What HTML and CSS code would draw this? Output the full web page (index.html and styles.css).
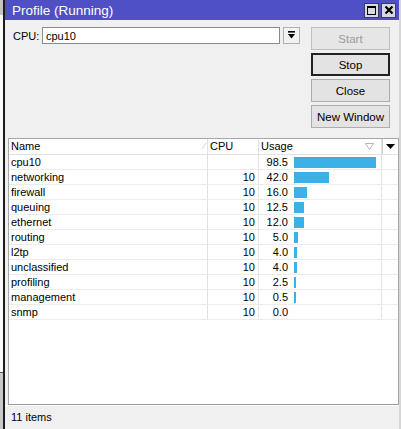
FILE: index.html
```html
<!DOCTYPE html>
<html lang="en">
<head>
  <meta charset="UTF-8" />
  <title>Profile (Running)</title>
  <link rel="stylesheet" href="styles.css">
</head>
<body>

  <div class="backdrop">
    <div class="bd-top"></div>
    <div class="bd-mid"></div>
    <div class="bd-bottom"></div>
  </div>

  <div class="window">
    <div class="titlebar">
      <span class="title">Profile (Running)</span>
      <div class="title-buttons">
        <span class="tb-btn"><span class="tb-max"></span></span>
        <span class="tb-btn">
          <svg width="10" height="10" viewBox="0 0 10 10"><path d="M1.5 1.5 L8.5 8.5 M8.5 1.5 L1.5 8.5" stroke="#000" stroke-width="2.2" /></svg>
        </span>
      </div>
    </div>

    <div class="content">
      <div class="top">
        <div class="cpu-row">
          <label class="cpu-label" for="cpu">CPU:</label>
          <div class="cpu-input" id="cpu">cpu10</div>
          <span class="drop-btn">
            <svg width="9" height="9" viewBox="0 0 9 9"><rect x="1" y="0" width="7" height="1.6" fill="#000" /><path d="M1 3 H8 L4.5 7.5 Z" fill="#000" /></svg>
          </span>
        </div>
        <div class="actions">
          <button class="btn" disabled>Start</button>
          <button class="btn btn-default">Stop</button>
          <button class="btn">Close</button>
          <button class="btn">New Window</button>
        </div>
      </div>

      <div class="table">
        <div class="row head">
          <div class="cell">Name<span class="sort-mark">&#x2044;</span></div>
          <div class="cell">CPU</div>
          <div class="cell">Usage<span class="sort-down">
            <svg width="9" height="7" viewBox="0 0 9 7"><path d="M0.5 0.5 H8.5 L4.5 6.5 Z" fill="none" stroke="#b4b4b4" /></svg>
          </span></div>
          <div class="cell col-menu">
            <svg width="9" height="5" viewBox="0 0 9 5"><path d="M0 0 H9 L4.5 5 Z" fill="#000" /></svg>
          </div>
        </div>
        <div class="rows" id="rows"></div>
        <div class="empty"></div>
      </div>
    </div>

    <div class="statusbar">11 items</div>
  </div>

  <script>
    (() => {
      // Profile data
      const entries = [
        { name: 'cpu10', cpu: '', usage: 98.5 },
        { name: 'networking', cpu: '10', usage: 42.0 },
        { name: 'firewall', cpu: '10', usage: 16.0 },
        { name: 'queuing', cpu: '10', usage: 12.5 },
        { name: 'ethernet', cpu: '10', usage: 12.0 },
        { name: 'routing', cpu: '10', usage: 5.0 },
        { name: 'l2tp', cpu: '10', usage: 4.0 },
        { name: 'unclassified', cpu: '10', usage: 4.0 },
        { name: 'profiling', cpu: '10', usage: 2.5 },
        { name: 'management', cpu: '10', usage: 0.5 },
        { name: 'snmp', cpu: '10', usage: 0.0 }
      ];

      const rows = document.getElementById('rows');

      entries.forEach(e => {
        const row = document.createElement('div');
        row.classList.add('row');
        const barWidth = e.usage > 0 ? Math.max(2, Math.round(e.usage * 0.83)) : 0;
        row.innerHTML = `
          <div class="cell">${e.name}</div>
          <div class="cell num">${e.cpu}</div>
          <div class="cell usage">
            <span class="usage-val">${e.usage.toFixed(1)}</span>
            ${barWidth ? `<span class="bar" style="width:${barWidth}px"></span>` : ''}
          </div>
          <div class="cell"></div>
        `;
        rows.appendChild(row);
      });
    })();
  </script>
</body>
</html>
```

FILE: styles.css
```css
body {
  margin: 0;
  width: 401px;
  height: 429px;
  overflow: hidden;
  display: flex;
  font-family: "Liberation Sans", Arial, sans-serif;
  font-size: 11px;
  color: #000;
}
.backdrop {
  width: 3px;
  display: flex;
  flex-direction: column;
}
.bd-top {
  height: 15px;
  background: #c4c4c4;
}
.bd-mid {
  flex: 1;
  background: #fbfbfb;
  border-bottom: 1px solid #555;
}
.bd-bottom {
  height: 56px;
  background: #c9c9c9;
}
.window {
  flex: 1;
  display: flex;
  flex-direction: column;
  background: #f0f0f0;
  border-left: 2px solid #1c1c1c;
  border-right: 2px solid #d6d6d6;
}
.titlebar {
  height: 20px;
  background: #4f50c6;
  color: #fff;
  display: flex;
  align-items: center;
  justify-content: space-between;
  padding: 0 0 0 7px;
  font-size: 13.5px;
}
.title-buttons {
  display: flex;
  gap: 2px;
  margin-right: 3px;
}
.tb-btn {
  width: 15px;
  height: 15px;
  box-sizing: border-box;
  background: #d9d9e4;
  border: 1px solid #3a3a5a;
  display: flex;
  align-items: center;
  justify-content: center;
}
.tb-max {
  width: 9px;
  height: 9px;
  border: 1.5px solid #000;
  border-top-width: 2px;
  box-sizing: border-box;
}
.content {
  flex: 1;
  display: flex;
  flex-direction: column;
  padding: 7px 0 0 3px;
}
.top {
  display: flex;
  padding-left: 5px;
  gap: 11px;
  margin-bottom: 10px;
}
.cpu-row {
  display: flex;
  align-items: center;
  align-self: flex-start;
  height: 17px;
}
.cpu-label {
  width: 29px;
}
.cpu-input {
  width: 238px;
  height: 17px;
  box-sizing: border-box;
  background: #fff;
  border: 1px solid #8a8a8a;
  padding: 1px 0 0 3px;
  line-height: 14px;
  margin-right: 3px;
}
.drop-btn {
  width: 17px;
  height: 17px;
  box-sizing: border-box;
  border: 1px solid #b0b0b0;
  background: #f2f2f2;
  display: flex;
  align-items: center;
  justify-content: center;
}
.actions {
  display: flex;
  flex-direction: column;
  gap: 3px;
}
.btn {
  width: 79px;
  height: 23px;
  font: inherit;
  font-size: 11.5px;
  color: #000;
  background: #e3e3e3;
  border: 1px solid #adadad;
  padding: 0;
}
.btn:disabled {
  color: #9a9a9a;
  border-color: #bfbfbf;
  background: #e6e6e6;
}
.btn-default {
  border: 2px solid #222;
}
.table {
  flex: 1;
  display: flex;
  flex-direction: column;
  background: #fff;
  border: 1px solid #a8a8a8;
  border-bottom-color: #9a9a9a;
}
.row {
  display: grid;
  grid-template-columns: 199px 51px 123px 1fr;
  height: 15px;
  box-sizing: border-box;
  border-bottom: 1px solid #ececec;
}
.row.head {
  height: 16px;
  border-bottom: 1px solid #e2e2e2;
}
.cell {
  border-right: 1px solid #e2e2e2;
  padding: 0 2px;
  line-height: 14px;
  white-space: nowrap;
  overflow: hidden;
  display: flex;
  align-items: center;
}
.cell:last-child {
  border-right: none;
}
.head .cell {
  line-height: 15px;
  justify-content: space-between;
}
.sort-mark {
  color: #c4c4c4;
  font-size: 9px;
}
.sort-down {
  display: flex;
  margin-right: 5px;
}
.col-menu {
  justify-content: center !important;
  border-left: 1px solid #cfcfcf;
}
.num {
  justify-content: flex-end;
  padding-right: 3px;
}
.usage {
  padding: 0;
}
.usage-val {
  width: 29px;
  text-align: right;
  margin-right: 6px;
}
.bar {
  height: 11px;
  background: #3cb1e8;
}
.empty {
  flex: 1;
}
.statusbar {
  height: 23px;
  line-height: 23px;
  padding-left: 6px;
  background: #f0f0f0;
  border-top: 1px solid #fff;
}
```
